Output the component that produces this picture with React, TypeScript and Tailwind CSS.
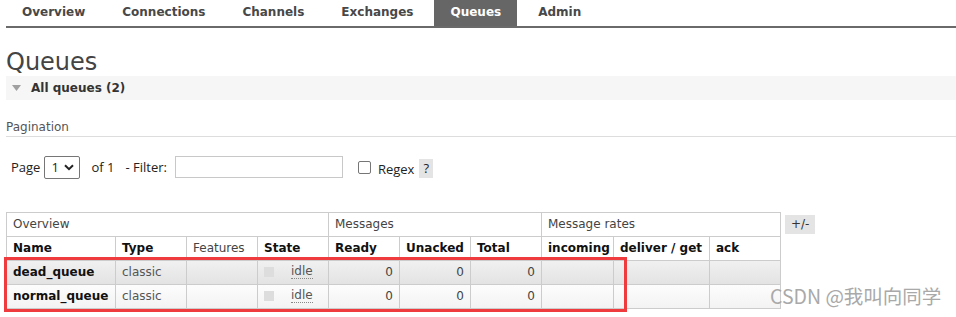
import React from 'react';

const tabs = ['Overview', 'Connections', 'Channels', 'Exchanges', 'Queues', 'Admin'];

const queues = [
    { name: 'dead_queue', alt: 'bg-gradient-to-b from-[#f1f1f1] to-[#e3e3e3]' },
    { name: 'normal_queue', alt: 'bg-gradient-to-b from-[#fdfdfd] to-[#f3f3f3]' },
];

const cell = 'border border-[#cccccc] px-[6px] h-[24px] leading-[14px]';

export default function App() {
    return (
        <div className="relative w-[956px] h-[317px] overflow-hidden bg-white pl-[6px] text-[12px] text-[#333] font-['DejaVu_Sans',Verdana,sans-serif]">
            {/* Top nav */}
            <ul className="flex gap-[5px] border-b-2 border-[#6a6a6a]">
                {tabs.map((t) => (
                    <li
                        key={t}
                        className={
                            'h-[26px] px-4 pt-[5px] leading-[14px] font-bold ' +
                            (t === 'Queues' ? 'bg-[#666666] text-white' : 'text-[#484848]')
                        }
                    >
                        {t}
                    </li>
                ))}
            </ul>

            <h1 className="mt-5 text-[24px] leading-[28px] text-[#444]">Queues</h1>

            {/* All queues section */}
            <div className="flex items-center h-6 bg-[#f6f6f6]">
                <svg width="9" height="6" viewBox="0 0 9 6" className="ml-[6px] mr-[10px]">
                    <path d="M0 0 H9 L4.5 6 Z" fill="#a0a0a0" />
                </svg>
                <span className="font-bold leading-6 text-[#333]">All queues (2)</span>
            </div>

            <div className="mt-5 pb-[2px] border-b border-[#dddddd] leading-[14px] text-[#555]">Pagination</div>

            {/* Pagination row */}
            <div className="mt-[18px] flex items-center pl-[5px] text-[13px] text-[#222] font-['Open_Sans','Liberation_Sans',sans-serif]">
                <span>Page</span>
                <div className="ml-[4px] flex items-center justify-between w-[36px] h-[23px] border border-[#767676] rounded-[2px] pl-[6px] pr-[5px]">
                    <span>1</span>
                    <svg width="10" height="7" viewBox="0 0 10 7">
                        <path d="M1 1.2 L5 5.2 L9 1.2" stroke="#222" strokeWidth="2" fill="none" />
                    </svg>
                </div>
                <span className="ml-[11px]">of 1</span>
                <span className="ml-[11px]">- Filter:</span>
                <div className="ml-[8px] w-[168px] h-[22px] border border-[#c8c8c8]" />
                <div className="ml-[15px] mt-[1px] w-[13px] h-[13px] border border-[#767676] rounded-[2px]" />
                <span className="ml-[7px] mt-[5px]">Regex</span>
                <span className="ml-[5px] mt-[2px] flex items-center justify-center w-[14px] h-[19px] bg-[#e4e4e4]">?</span>
            </div>

            {/* Queue table */}
            <div className="mt-[32px] flex items-start">
                <table className="table-fixed border-collapse w-[774px]">
                    <colgroup>
                        <col className="w-[109px]" />
                        <col className="w-[71px]" />
                        <col className="w-[71px]" />
                        <col className="w-[71px]" />
                        <col className="w-[71px]" />
                        <col className="w-[71px]" />
                        <col className="w-[71px]" />
                        <col className="w-[72px]" />
                        <col className="w-[96px]" />
                        <col className="w-[71px]" />
                    </colgroup>
                    <thead>
                        <tr className="text-left text-[#444]">
                            <th colSpan={4} className={cell + ' font-normal'}>Overview</th>
                            <th colSpan={3} className={cell + ' font-normal'}>Messages</th>
                            <th colSpan={3} className={cell + ' font-normal'}>Message rates</th>
                        </tr>
                        <tr className="text-left text-[#111]">
                            <th className={cell}>Name</th>
                            <th className={cell}>Type</th>
                            <th className={cell + ' font-normal text-[#444]'}>Features</th>
                            <th className={cell}>State</th>
                            <th className={cell}>Ready</th>
                            <th className={cell}>Unacked</th>
                            <th className={cell}>Total</th>
                            <th className={cell}>incoming</th>
                            <th className={cell}>deliver / get</th>
                            <th className={cell}>ack</th>
                        </tr>
                    </thead>
                    <tbody>
                        {queues.map((q) => (
                            <tr key={q.name} className={q.alt}>
                                <td className={cell + ' font-bold text-[#111]'}>{q.name}</td>
                                <td className={cell + ' text-[#555]'}>classic</td>
                                <td className={cell}></td>
                                <td className={cell}>
                                    <div className="flex items-center">
                                        <span className="w-[10px] h-[10px] bg-[#dddddd]" />
                                        <abbr className="ml-[17px] no-underline border-b border-dotted border-[#888] text-[#555] leading-[13px]">idle</abbr>
                                    </div>
                                </td>
                                <td className={cell + ' text-right text-[#444]'}>0</td>
                                <td className={cell + ' text-right text-[#444]'}>0</td>
                                <td className={cell + ' text-right text-[#444]'}>0</td>
                                <td className={cell}></td>
                                <td className={cell}></td>
                                <td className={cell}></td>
                            </tr>
                        ))}
                    </tbody>
                </table>
                <span className="ml-[4px] mt-[3px] px-[6px] h-[19px] leading-[19px] bg-[#e4e4e4] text-[#333]">+/-</span>
            </div>

            {/* Screenshot annotation + watermark */}
            <div className="absolute left-[4px] top-[257px] w-[623px] h-[55px] border-[3px] border-[#f03b3e]" />
            <div className="absolute left-[770px] top-[283px] text-[19.5px] leading-[26px] text-[#a9a9a9] font-['Noto_Sans_CJK_SC','Noto_Sans',sans-serif]">
                CSDN @我叫向同学
            </div>
        </div>
    );
}
